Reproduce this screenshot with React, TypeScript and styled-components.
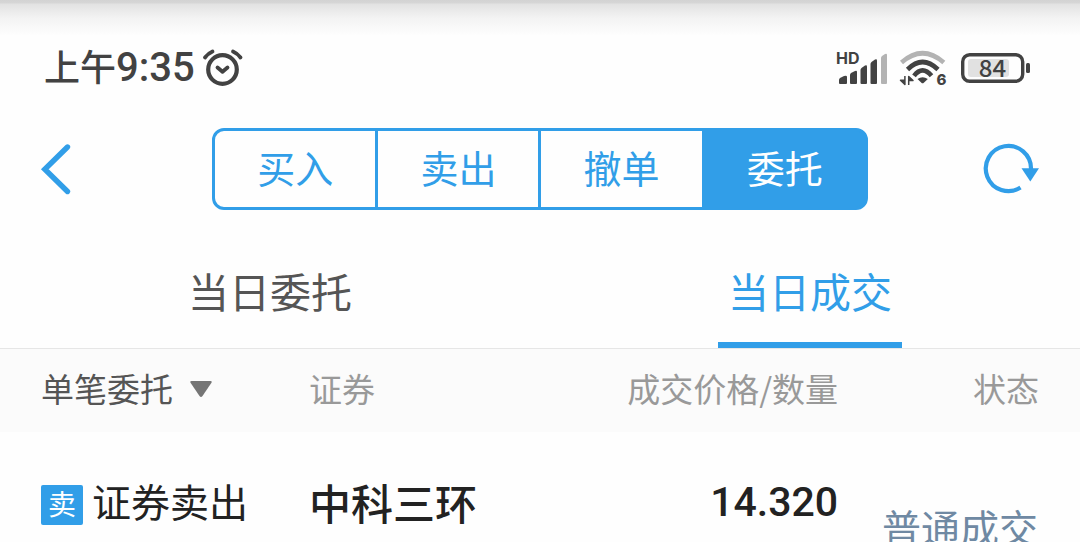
import React, { useState } from "react";
import styled, { createGlobalStyle } from "styled-components";

const BLUE = "#319ee8";
const INK = "#424242";
const FONT = '"Noto Sans CJK SC", "Noto Sans", sans-serif';
const DIGITS = 'Roboto, "Noto Sans", sans-serif';

const GlobalStyle = createGlobalStyle`
  *, *::before, *::after { box-sizing: border-box; }
  html, body, #root { height: 100%; }
  body {
    margin: 0;
    overflow: hidden;
    background: #fefefe;
    font-family: ${FONT};
    color: #222;
  }
  button, select { font: inherit; color: inherit; }
`;

const Screen = styled.div`
  height: 100%;
  overflow: hidden;
  background: linear-gradient(#d3d3d3 0, #d6d6d6 3px, #e2e2e2 4px, #f3f3f3 18px, #fefefe 36px);
`;

const StatusBar = styled.header`
  display: flex;
  align-items: center;
  justify-content: space-between;
  height: 128px;
  padding: 42px 50px 34px 44px;
  color: ${INK};
`;

const StatusGroup = styled.div<{ $gap: number }>`
  display: flex;
  align-items: center;
  gap: ${(p) => p.$gap}px;
`;

const Clock = styled.time`
  display: flex;
  align-items: baseline;
  padding-bottom: 4px;
  font-size: 36px;
  line-height: 46px;
  font-weight: 500;
`;

const ClockDigits = styled.span`
  font-family: ${DIGITS};
  font-size: 40px;
`;

const Icon = styled.svg`
  display: block;
  flex: none;
  overflow: visible;
`;

const Toolbar = styled.div`
  display: grid;
  grid-template-columns: 30fr 115fr 30fr;
  align-items: center;
  padding: 0 41px;
`;

const IconButton = styled.button<{ $end?: boolean }>`
  justify-self: ${(p) => (p.$end ? "end" : "start")};
  padding: 0;
  border: 0;
  background: none;
  color: ${BLUE};
  cursor: pointer;
`;

const Segments = styled.nav`
  display: flex;
  padding-left: 3px;
`;

const Segment = styled.button<{ $active: boolean }>`
  flex: 1;
  height: 82px;
  margin-left: -3px;
  padding: 0 0 4px;
  border: 3px solid ${BLUE};
  background: ${(p) => (p.$active ? BLUE : "#fefefe")};
  color: ${(p) => (p.$active ? "#fff" : BLUE)};
  font-size: 38px;
  line-height: 72px;
  cursor: pointer;
  &:first-child { border-radius: 12px 0 0 12px; }
  &:last-child { border-radius: 0 12px 12px 0; }
`;

const Tabs = styled.div`
  display: flex;
  padding-top: 34px;
`;

const Tab = styled.button<{ $active: boolean }>`
  flex: 1;
  display: flex;
  justify-content: center;
  padding: 0;
  border: 0;
  background: none;
  color: ${(p) => (p.$active ? BLUE : "#555")};
  font-size: 41px;
  line-height: 92px;
  cursor: pointer;
`;

const TabLabel = styled.span<{ $active: boolean }>`
  padding: 0 10px 6px;
  border-bottom: 6px solid ${(p) => (p.$active ? BLUE : "transparent")};
`;

const Trades = styled.table`
  width: 100%;
  table-layout: fixed;
  border-collapse: separate;
  border-spacing: 0;
`;

const Col = styled.col<{ $w?: string }>`
  width: ${(p) => p.$w ?? "auto"};
`;

const HeadCell = styled.th<{ $align?: "left" | "right" }>`
  height: 84px;
  padding: 0 0 6px;
  border-top: 1px solid #e6e6e6;
  background: #fbfbfb;
  color: #999;
  font-size: 33px;
  font-weight: 400;
  line-height: 48px;
  text-align: ${(p) => p.$align ?? "left"};
  white-space: nowrap;
  &:first-child { padding-left: 41px; }
  &:last-child { padding-right: 41px; }
`;

const Filter = styled.label`
  display: flex;
  align-items: center;
  gap: 17px;
  color: #555;
`;

const FilterSelect = styled.select`
  appearance: none;
  padding: 0;
  border: 0;
  background: none;
  cursor: pointer;
`;

const Caret = styled(Icon)`
  margin-top: 4px;
`;

const Cell = styled.td<{ $align?: "left" | "right" }>`
  height: 196px;
  padding: 40px 0 0;
  vertical-align: top;
  text-align: ${(p) => p.$align ?? "left"};
  line-height: 56px;
  white-space: nowrap;
  &:first-child { padding-left: 41px; }
`;

const Side = styled.div`
  display: flex;
  align-items: center;
  gap: 9px;
  font-size: 39px;
`;

const SideBadge = styled.span`
  width: 42px;
  margin-top: 10px;
  padding-bottom: 4px;
  border-radius: 2px;
  background: ${BLUE};
  color: #fff;
  font-size: 28px;
  line-height: 36px;
  text-align: center;
`;

const StockName = styled.div`
  font-size: 42px;
  font-weight: 500;
  line-height: 60px;
`;

const Price = styled.div`
  font-family: ${DIGITS};
  font-size: 41px;
  font-weight: 500;
  line-height: 60px;
`;

const StatusCell = styled(Cell)`
  padding: 0 42px 8px 0;
  vertical-align: middle;
  color: #6f89a3;
  font-size: 39px;
`;

const AlarmIcon = () => (
  <Icon width="40" height="38" viewBox="203 49 40 38" fill="none" stroke={INK} strokeLinecap="round" strokeLinejoin="round" aria-label="闹钟">
    <circle cx="222.500" cy="69.500" r="14.300" strokeWidth="4.200" />
    <path d="M217.500 67.500L222.500 71.800L227.500 67.500" strokeWidth="3.800" />
    <path d="M205 57.500Q208 53.500 212.500 51.500M233 51.500Q237.500 53.500 240.500 57.500" strokeWidth="3.800" />
  </Icon>
);

const SignalIcon = () => (
  <Icon width="50" height="36" viewBox="836 50 50 36" fill={INK} aria-label="信号">
    <text x="836" y="64" fontFamily="Inter, sans-serif" fontSize="16" fontWeight="700">HD</text>
    <path d="M839 83V80Q839 79 840 78L844 76Q847 75 847 77V83Q847 84 846 84H840Q839 84 839 83Z" />
    <path d="M850 83V75Q850 74 851 73L855 71Q857 70 857 72V83Q857 84 856 84H851Q850 84 850 83Z" />
    <path d="M860.500 83V70Q860.500 69 861.500 68L865 65.500Q867 64.500 867 66.500V83Q867 84 866 84H861.500Q860.500 84 860.500 83Z" />
    <path d="M870.500 83V64Q870.500 63 871.500 62L875 59.500Q877 58.500 877 60.500V83Q877 84 876 84H871.500Q870.500 84 870.500 83Z" />
    <path fill="#b3b3b3" d="M881 83V58Q881 57 882 56L885 54Q887 53 887 55V83Q887 84 886 84H882Q881 84 881 83Z" />
  </Icon>
);

const WifiIcon = () => (
  <Icon width="47" height="36" viewBox="900 51 47 36" fill="none" strokeWidth="4.600" aria-label="Wi-Fi 6">
    <path d="M901.500 63.500Q922.500 45 943.800 63.500" stroke="#b3b3b3" />
    <path d="M907.500 70.500Q922.500 55.500 938 70.500" stroke={INK} />
    <path d="M914 76.800Q922.500 66 931.500 76.800" stroke={INK} />
    <path d="M917.500 80Q922.600 76.500 927.800 80L923.800 83.800Q922.600 84.800 921.400 83.800Z" fill={INK} />
    <path d="M904.900 77V85.500L900.500 81.200H904.900M908.700 86V77.500L913 81.600H908.700" fill={INK} stroke={INK} strokeWidth="1.500" strokeLinejoin="round" />
    <text x="936.500" y="86" fill={INK} fontFamily="Inter, sans-serif" fontSize="15" fontWeight="800">6</text>
  </Icon>
);

const BatteryIcon = () => (
  <Icon width="69" height="30" viewBox="961 53 69 30" aria-label="电量">
    <rect x="962.700" y="54.700" width="60" height="26.600" rx="7" fill="none" stroke={INK} strokeWidth="3.400" />
    <rect x="968" y="59" width="41" height="18" rx="3" fill="#e1e1e1" />
    <rect x="1026" y="63" width="4" height="10" rx="1.500" fill={INK} />
    <text x="992.500" y="76.500" textAnchor="middle" fill={INK} fontFamily={FONT} fontSize="24" fontWeight="500">84</text>
  </Icon>
);

const BackIcon = () => (
  <Icon width="29" height="50" viewBox="41 144 29 50" fill="none" stroke="currentColor" strokeWidth="5.400" strokeLinecap="round" aria-hidden="true">
    <path d="M67.500 147L44.800 169.300L67.500 191.500" strokeLinejoin="miter" />
  </Icon>
);

const RefreshIcon = () => (
  <Icon width="55" height="50" viewBox="984 144 55 50" fill="none" aria-hidden="true">
    <path d="M1031 169A22.600 22.600 0 1 0 1020.500 187.600" stroke="currentColor" strokeWidth="4.200" />
    <path d="M1021.500 168.300H1039L1030.300 181.500Z" fill="currentColor" />
  </Icon>
);

const CaretIcon = () => (
  <Caret width="22" height="17" viewBox="0 0 22 17" aria-hidden="true">
    <path d="M1.500 0H20.500Q22.500 0 21.300 2L12.500 15Q11 17 9.500 15L.7 2Q-.5 0 1.500 0Z" fill="#757575" />
  </Caret>
);

const SEGMENTS = ["买入", "卖出", "撤单", "委托"];
const TABS = ["当日委托", "当日成交"];
const TRADES = [
  { badge: "卖", side: "证券卖出", name: "中科三环", price: "14.320", status: "普通成交" },
];

export default function App() {
  const [segment, setSegment] = useState(3);
  const [tab, setTab] = useState(1);

  return (
    <>
      <GlobalStyle />
      <Screen>
        <StatusBar>
          <StatusGroup $gap={8}>
            <Clock dateTime="09:35">
              上午<ClockDigits>9:35</ClockDigits>
            </Clock>
            <AlarmIcon />
          </StatusGroup>
          <StatusGroup $gap={14}>
            <SignalIcon />
            <WifiIcon />
            <BatteryIcon />
          </StatusGroup>
        </StatusBar>

        <Toolbar>
          <IconButton type="button" aria-label="返回">
            <BackIcon />
          </IconButton>
          <Segments>
            {SEGMENTS.map((label, i) => (
              <Segment key={label} type="button" $active={i === segment} onClick={() => setSegment(i)}>
                {label}
              </Segment>
            ))}
          </Segments>
          <IconButton type="button" aria-label="刷新" $end>
            <RefreshIcon />
          </IconButton>
        </Toolbar>

        <Tabs role="tablist">
          {TABS.map((label, i) => (
            <Tab key={label} type="button" role="tab" aria-selected={i === tab} $active={i === tab} onClick={() => setTab(i)}>
              <TabLabel $active={i === tab}>{label}</TabLabel>
            </Tab>
          ))}
        </Tabs>

        <Trades>
          <colgroup>
            <Col $w="28.6%" />
            <Col $w="25%" />
            <Col $w="24%" />
            <Col />
          </colgroup>
          <thead>
            <tr>
              <HeadCell scope="col">
                <Filter>
                  <FilterSelect aria-label="委托类型" defaultValue="single">
                    <option value="single">单笔委托</option>
                  </FilterSelect>
                  <CaretIcon />
                </Filter>
              </HeadCell>
              <HeadCell scope="col">证券</HeadCell>
              <HeadCell scope="col" $align="right">成交价格/数量</HeadCell>
              <HeadCell scope="col" $align="right">状态</HeadCell>
            </tr>
          </thead>
          <tbody>
            {TRADES.map((t) => (
              <tr key={t.name}>
                <Cell>
                  <Side>
                    <SideBadge>{t.badge}</SideBadge>
                    {t.side}
                  </Side>
                </Cell>
                <Cell>
                  <StockName>{t.name}</StockName>
                </Cell>
                <Cell $align="right">
                  <Price>{t.price}</Price>
                </Cell>
                <StatusCell $align="right">{t.status}</StatusCell>
              </tr>
            ))}
          </tbody>
        </Trades>
      </Screen>
    </>
  );
}
